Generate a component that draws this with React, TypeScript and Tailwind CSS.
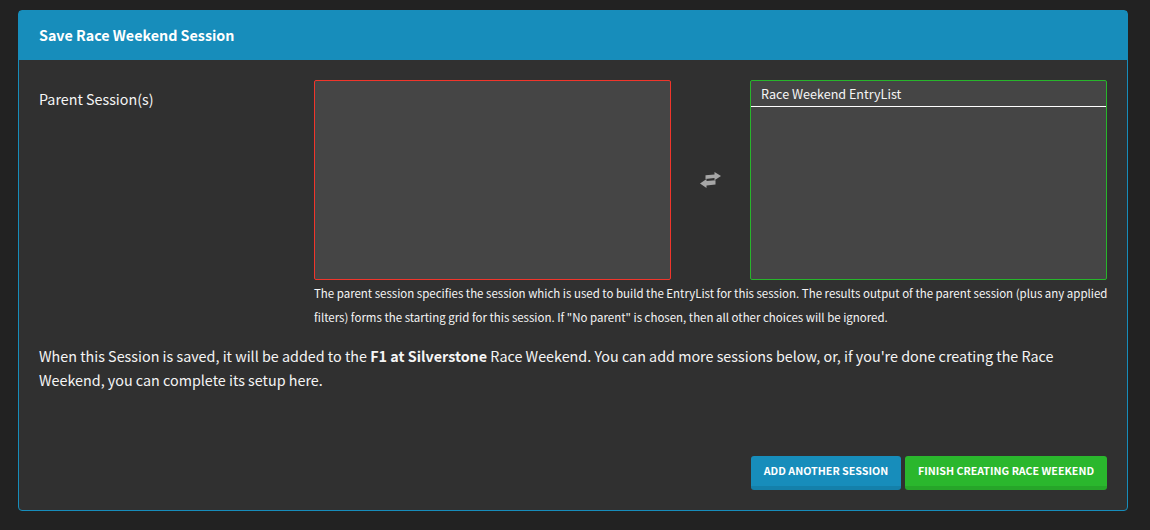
export default function App() {
  return (
    <div className="min-h-[530px] bg-[#222222] pt-[10px] px-[18px] pb-[19px] text-[#f5f5f5] [font-family:'Noto_Sans_CJK_SC',sans-serif]">
      <div className="w-[1110px] h-[501px] rounded-[4px] border border-[#178dbb] bg-[#303030] flex flex-col">
        <div className="h-[49px] shrink-0 bg-[#178dbb] pl-[20px] pb-[2px] flex items-center text-[14.3px] font-bold text-white">
          Save Race Weekend Session
        </div>
        <div className="flex-1 flex flex-col pl-[20px] pr-[20px] pt-[20px]">
          <div className="flex">
            <div className="w-[275px] shrink-0 pt-[9px] text-[14.3px] leading-[20px]">Parent Session(s)</div>
            <div className="w-[793px]">
              <div className="flex items-center h-[200px]">
                <div className="w-[357px] h-[200px] rounded-[2px] border border-[#f0352b] bg-[#454545]" />
                <div className="flex-1 flex justify-center">
                  <svg width="21" height="16" viewBox="0 0 21 16" className="text-[#a6a6a6]" fill="currentColor">
                    <path d="M5.5 3.2 L14.5 2.4 V0 L21 4 L14.5 8.2 V6 L5.5 6.9 Z" />
                    <path d="M15.5 8.2 L6.5 9.1 V7 L0 11.6 L6.5 16 V13.5 L15.5 12.6 Z" />
                  </svg>
                </div>
                <div className="w-[357px] h-[200px] rounded-[2px] border border-[#27b52b] bg-[#454545]">
                  <div className="h-[26px] border-b border-white pl-[10px] text-[12.6px] leading-[26px]">Race Weekend EntryList</div>
                </div>
              </div>
              <p className="text-[11.47px] leading-[24px] mt-[1px] w-[800px]">
                The parent session specifies the session which is used to build the EntryList for this session. The results output of the parent session (plus any applied filters) forms the starting grid for this session. If "No parent" is chosen, then all other choices will be ignored.
              </p>
            </div>
          </div>
          <p className="text-[14.33px] leading-[24px] mt-[15px]">
            When this Session is saved, it will be added to the <b>F1 at Silverstone</b> Race Weekend. You can add more sessions below, or, if you're done creating the Race Weekend, you can complete its setup here.
          </p>
          <div className="mt-auto mb-[20px] flex justify-end gap-[4px]">
            <button className="h-[34px] w-[150px] rounded-[3px] bg-[#178dbb] border-b-4 border-[#1480aa] text-white text-[10.7px] font-bold">ADD ANOTHER SESSION</button>
            <button className="h-[34px] w-[202px] rounded-[3px] bg-[#2ab72d] border-b-4 border-[#26a529] text-white text-[10.7px] font-bold">FINISH CREATING RACE WEEKEND</button>
          </div>
        </div>
      </div>
    </div>
  );
}
